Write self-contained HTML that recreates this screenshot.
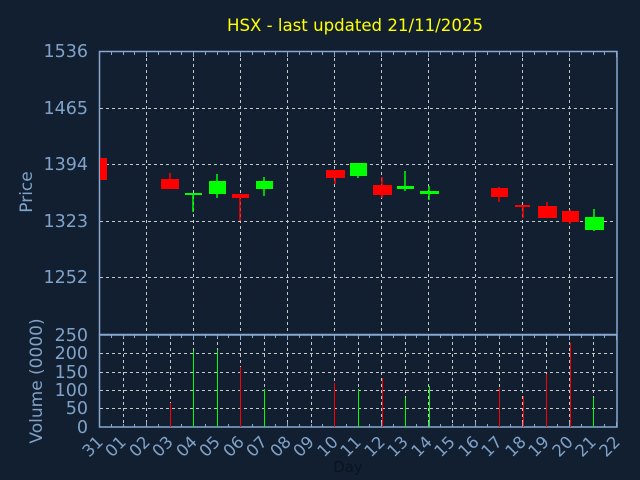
<!DOCTYPE html>
<html><head><style>html,body{margin:0;padding:0;background:#111f30;}svg{display:block}</style></head>
<body>
<svg id="s" width="640" height="480" xmlns="http://www.w3.org/2000/svg" font-family="DejaVu Sans, Liberation Sans, sans-serif">
<rect width="640" height="480" fill="#111f30"/>
<text x="355" y="31" fill="#ffff00" font-size="16.6" text-anchor="middle">HSX - last updated 21/11/2025</text>
<g id="grid" stroke="#c8c8c8" stroke-width="1" stroke-dasharray="3,3"></g>
<g id="ticks" stroke="#88a8d0" stroke-width="1"></g>
<g fill="none" stroke="#88a8d0" stroke-width="1.5">
<rect x="99.5" y="51.5" width="517.5" height="283"/>
<rect x="99.5" y="335" width="517.5" height="92"/>
</g>
<g fill="#80a2c8" font-size="17.5" text-anchor="end">
<text x="88" y="57">1536</text>
<text x="88" y="114">1465</text>
<text x="88" y="170">1394</text>
<text x="88" y="227">1323</text>
<text x="88" y="283">1252</text>
<text x="88" y="341">250</text>
<text x="88" y="359">200</text>
<text x="88" y="378">150</text>
<text x="88" y="396">100</text>
<text x="88" y="414">50</text>
<text x="88" y="433">0</text>
</g>
<text transform="translate(32,192) rotate(-90)" fill="#80a2c8" font-size="17" text-anchor="middle">Price</text>
<text transform="translate(42,381) rotate(-90)" fill="#80a2c8" font-size="17" text-anchor="middle">Volume (0000)</text>
<text x="348" y="472" font-size="15" text-anchor="middle" fill="#0a1420">Day</text>
<g fill="#80a2c8" font-size="16.5" text-anchor="end">
<text transform="translate(104,443) rotate(-45)">31</text>
<text transform="translate(127,443) rotate(-45)">01</text>
<text transform="translate(151,443) rotate(-45)">02</text>
<text transform="translate(174,443) rotate(-45)">03</text>
<text transform="translate(198,443) rotate(-45)">04</text>
<text transform="translate(221,443) rotate(-45)">05</text>
<text transform="translate(245,443) rotate(-45)">06</text>
<text transform="translate(268,443) rotate(-45)">07</text>
<text transform="translate(292,443) rotate(-45)">08</text>
<text transform="translate(315,443) rotate(-45)">09</text>
<text transform="translate(339,443) rotate(-45)">10</text>
<text transform="translate(362,443) rotate(-45)">11</text>
<text transform="translate(386,443) rotate(-45)">12</text>
<text transform="translate(409,443) rotate(-45)">13</text>
<text transform="translate(433,443) rotate(-45)">14</text>
<text transform="translate(456,443) rotate(-45)">15</text>
<text transform="translate(480,443) rotate(-45)">16</text>
<text transform="translate(503,443) rotate(-45)">17</text>
<text transform="translate(527,443) rotate(-45)">18</text>
<text transform="translate(550,443) rotate(-45)">19</text>
<text transform="translate(574,443) rotate(-45)">20</text>
<text transform="translate(597,443) rotate(-45)">21</text>
<text transform="translate(621,443) rotate(-45)">22</text>
</g>
<g fill="#ff0000" stroke="#ff0000" stroke-width="1.5">
<rect x="100" y="158" width="7" height="22" stroke="none"/>
<line x1="170" y1="173" x2="170" y2="180"/><rect x="161" y="179" width="18" height="10" stroke="none"/>
<line x1="240" y1="195" x2="240" y2="221"/><rect x="232" y="194" width="17" height="4" stroke="none"/>
<line x1="335" y1="175" x2="335" y2="184"/><rect x="326" y="170" width="19" height="8" stroke="none"/>
<line x1="382" y1="177" x2="382" y2="198"/><rect x="373" y="185" width="19" height="10" stroke="none"/>
<line x1="499" y1="187" x2="499" y2="202"/><rect x="491" y="188" width="17" height="9" stroke="none"/>
<line x1="523" y1="205" x2="523" y2="218"/><rect x="515" y="205" width="15" height="2" stroke="none"/>
<line x1="547" y1="202" x2="547" y2="218"/><rect x="538" y="206" width="19" height="12" stroke="none"/>
<line x1="570" y1="210" x2="570" y2="224"/><rect x="562" y="211" width="17" height="11" stroke="none"/>
</g>
<g fill="#00ff00" stroke="#00ff00" stroke-width="1.5">
<line x1="193" y1="193" x2="193" y2="212"/><rect x="185" y="193" width="17" height="2" stroke="none"/>
<line x1="217" y1="174" x2="217" y2="198"/><rect x="209" y="181" width="17" height="13" stroke="none"/>
<line x1="264" y1="177" x2="264" y2="196"/><rect x="256" y="181" width="17" height="8" stroke="none"/>
<line x1="358" y1="170" x2="358" y2="178"/><rect x="350" y="163" width="17" height="13" stroke="none"/>
<line x1="405" y1="171" x2="405" y2="191"/><rect x="397" y="186" width="17" height="3" stroke="none"/>
<line x1="429" y1="186" x2="429" y2="200"/><rect x="420" y="191" width="19" height="3" stroke="none"/>
<line x1="594" y1="209" x2="594" y2="231"/><rect x="585" y="217" width="19" height="13" stroke="none"/>
</g>
<g stroke-width="1">
<line x1="170.5" y1="403" x2="170.5" y2="427" stroke="#ff0000"/>
<line x1="193.5" y1="351" x2="193.5" y2="427" stroke="#00ff00"/>
<line x1="217.5" y1="350" x2="217.5" y2="427" stroke="#00ff00"/>
<line x1="240.5" y1="367" x2="240.5" y2="427" stroke="#ff0000"/>
<line x1="264.5" y1="389" x2="264.5" y2="427" stroke="#00ff00"/>
<line x1="334.5" y1="383" x2="334.5" y2="427" stroke="#ff0000"/>
<line x1="358.5" y1="389" x2="358.5" y2="427" stroke="#00ff00"/>
<line x1="382.5" y1="378" x2="382.5" y2="427" stroke="#ff0000"/>
<line x1="405.5" y1="398" x2="405.5" y2="427" stroke="#00ff00"/>
<line x1="429.5" y1="386" x2="429.5" y2="427" stroke="#00ff00"/>
<line x1="499.5" y1="388" x2="499.5" y2="427" stroke="#ff0000"/>
<line x1="523.5" y1="396" x2="523.5" y2="427" stroke="#ff0000"/>
<line x1="546.5" y1="374" x2="546.5" y2="427" stroke="#ff0000"/>
<line x1="570.5" y1="343" x2="570.5" y2="427" stroke="#ff0000"/>
<line x1="593.5" y1="398" x2="593.5" y2="427" stroke="#00ff00"/>
</g>
</svg>
<script>
var NS="http://www.w3.org/2000/svg";
function L(g,x1,y1,x2,y2){var l=document.createElementNS(NS,"line");l.setAttribute("x1",x1);l.setAttribute("y1",y1);l.setAttribute("x2",x2);l.setAttribute("y2",y2);g.appendChild(l);}
var g=document.getElementById("grid"),t=document.getElementById("ticks");
for(var i=1;i<11;i++){var x=Math.round(99+47*i)+0.5;L(g,x,52,x,334);}
[108,164,221,277].forEach(function(y){L(g,100,y+0.5,616,y+0.5);});
for(var i=1;i<22;i++){var x=Math.round(99+23.5*i)+0.5;L(g,x,336,x,426);}
[353,372,390,408].forEach(function(y){L(g,100,y+0.5,616,y+0.5);});
for(var i=0;i<=44;i++){var x=Math.round(99+11.75*i)+0.5;var big=(i%4==0);
L(t,x,52,x,big?57:55);L(t,x,335,x,big?340:338);L(t,x,427,x,big?422:424);}
</script>
</body></html>
